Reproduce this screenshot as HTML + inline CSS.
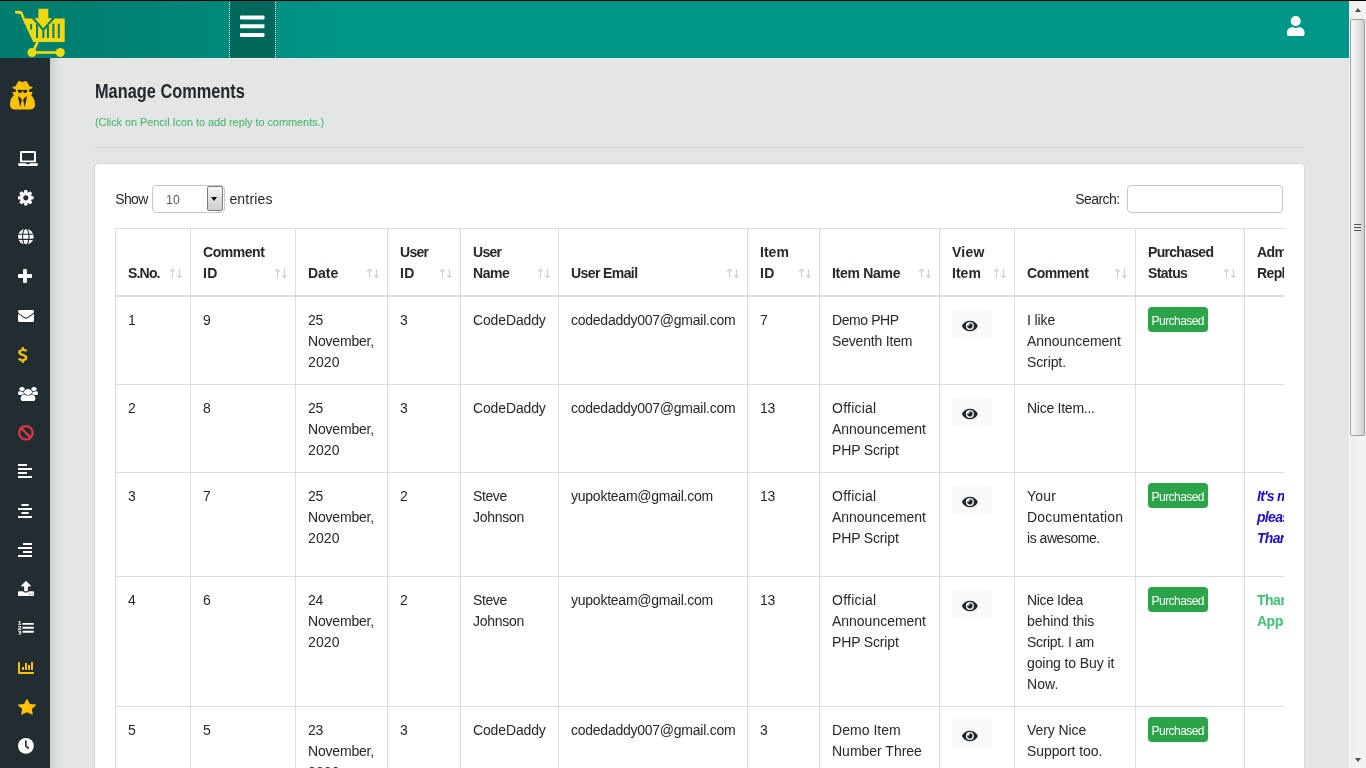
<!DOCTYPE html>
<html lang="en"><head><meta charset="utf-8"><title>Manage Comments</title>
<style>
*{box-sizing:border-box}
html,body{margin:0;padding:0}
body{width:1366px;height:768px;overflow:hidden;position:relative;background:#e4e5e5;font-family:"Liberation Sans",sans-serif;font-size:14px;line-height:21px;color:#23282c;letter-spacing:-.3px}
.abs{position:absolute}
#all{position:absolute;left:0;top:0;width:1366px;height:768px;will-change:transform}
#topline{left:0;top:0;width:1366px;height:1px;background:#000}
#hdr{left:0;top:1px;width:1349px;height:57px;background:linear-gradient(90deg,#007d6e 0,#008072 100px,#00897b 230px,#009688 335px)}
#brand{display:none}
#tgl{left:230px;top:0;width:45px;height:57px;background:#00695c;outline:1px dotted #fff}
#side{left:0;top:58px;width:50px;height:710px;background:#222d32}
#shade{left:50px;top:58px;width:12px;height:710px;background:linear-gradient(90deg,rgba(0,0,0,.10),rgba(0,0,0,.03) 50%,rgba(0,0,0,0))}
.ic{position:absolute;display:block;overflow:visible}
h1{position:absolute;left:95px;top:77px;margin:0;font-size:19.5px;line-height:28px;font-weight:bold;white-space:nowrap;letter-spacing:0;transform-origin:0 50%;transform:scaleX(.838);color:#23282c}
#hint{left:95px;top:112.7px;font-size:11px;line-height:18px;color:#3eb468;white-space:nowrap;letter-spacing:-.08px}
#hr{left:95px;top:147px;width:1209px;height:1px;background:#cfd0d1}
#card{left:95px;top:164px;width:1209px;height:640px;background:#fff;border-radius:4px;box-shadow:0 0 0 1px rgba(200,206,211,.55)}
.lbl{white-space:nowrap;line-height:21px}
#sel{left:151.5px;top:184.5px;width:73.2px;height:28.6px;border:1px solid #c3c8d0;border-radius:4px;background:#fff}
#sel .v{position:absolute;left:13.6px;top:4.4px;font-size:12.3px;line-height:20px;letter-spacing:0;color:#4f5862}
#sel .b{position:absolute;right:.6px;top:.7px;width:16.4px;height:25.2px;border:1px solid #7b7b7b;border-radius:2px;background:linear-gradient(180deg,#f6f6f6,#dedede 55%,#cfcfcf)}
#sel .b:after{content:"";position:absolute;left:3.6px;top:9.6px;border:3.6px solid transparent;border-top:4.2px solid #000;border-bottom:0}
#srch{left:1126.6px;top:184.5px;width:156.6px;height:28.6px;border:1px solid #c3c8d0;border-radius:4px;background:#fff}
#tw{left:115px;top:228px;width:1169px;height:560px;overflow:hidden}
table.dt{border-collapse:separate;border-spacing:0;table-layout:fixed;width:1259px}
.dt th,.dt td{border-left:1px solid #dcdde0;border-top:1px solid #dcdde0;padding:13px 0 0 12px;vertical-align:top;text-align:left;white-space:nowrap;overflow:hidden}
.dt th{height:69px;border-bottom:2px solid #dcdde0;font-weight:bold;vertical-align:bottom;padding:0 0 11px 12px;letter-spacing:-.62px;color:#23282c}
.thw{position:relative}
.srt{position:absolute;right:8.8px;bottom:0;font-family:"DejaVu Sans",sans-serif;font-weight:normal;font-size:12.5px;letter-spacing:-3.4px;color:rgba(35,40,44,.24)}
.dt tr.r1 td{border-top:0}
.eyeb{display:block;width:40px;height:30.4px;background:#f8f9fa;border-radius:3px;position:relative;margin-top:-1px}
.eyeb svg{position:absolute;left:9.8px;top:9.5px;display:block}
.bdg{display:block;position:relative;top:-3px;width:60px;height:24.6px;border-radius:4px;background:#2ba449;color:#fff;font-size:12px;line-height:29.2px;overflow:hidden;text-align:center;letter-spacing:-.56px;text-indent:-.5px}
.rb{color:#1c0fc9;font-weight:bold;font-style:italic;letter-spacing:-.7px}
.rg{color:#3fbf74;font-weight:bold;letter-spacing:-.5px}
#sb{left:1349px;top:1px;width:17px;height:767px;background:linear-gradient(90deg,#fbfbfb 0,#f0f0f0 2px,#f3f3f3)}
#sbt{left:.9px;top:18px;width:14.7px;height:417px;border:1px solid #9d9d9d;border-radius:2px;background:linear-gradient(90deg,#f7f7f7,#e6e6e8 50%,#cfcfd3)}
.arr{position:absolute;left:6.3px;width:0;height:0;border:3.6px solid transparent}
</style></head>
<body>
<div id="all">
<div id="hdr" class="abs">
  <div id="brand" class="abs"></div>
  <div id="tgl" class="abs"></div>
  <svg class="ic" style="left:240.2px;top:10.6px" width="24.5" height="28.4" viewBox="0 0 448 512"><path fill="#fff" d="M16 132h416c8.837 0 16-7.163 16-16V76c0-8.837-7.163-16-16-16H16C7.163 60 0 67.163 0 76v40c0 8.837 7.163 16 16 16zm0 160h416c8.837 0 16-7.163 16-16v-40c0-8.837-7.163-16-16-16H16c-8.837 0-16 7.163-16 16v40c0 8.837 7.163 16 16 16zm0 160h416c8.837 0 16-7.163 16-16v-40c0-8.837-7.163-16-16-16H16c-8.837 0-16 7.163-16 16v40c0 8.837 7.163 16 16 16z"/></svg>
  <svg class="ic" style="left:1287px;top:15px" width="17.5" height="20" viewBox="0 0 448 512"><path fill="#fff" d="M224 256c70.7 0 128-57.3 128-128S294.7 0 224 0 96 57.3 96 128s57.3 128 128 128zm89.600 32h-16.700c-22.200 10.200-46.900 16-72.900 16s-50.600-5.800-72.900-16h-16.700C60.200 288 0 348.200 0 422.400V464c0 26.500 21.500 48 48 48h352c26.500 0 48-21.500 48-48v-41.600c0-74.200-60.200-134.400-134.400-134.400z"/></svg>
  <svg class="ic" style="left:10px;top:3px" width="64" height="56" viewBox="10 4 64 56">
    <g fill="#f0d911" stroke="none">
      <path d="M16.300 10.800h3.400c1.300 0 2.300.7 2.800 1.900l2.500 5.900H64.700V42H33.300L23 20.200l-2.300-5.600c-.2-.6-.6-.9-1.200-.9h-3.200a1.450 1.450 0 0 1 0-2.900z"/>
      <path d="M38.400 8.700h9.900v9.500h4.100L43.300 28.300 34.700 18.200h3.700z"/>
      <circle cx="32" cy="52.500" r="4.500"/><circle cx="60.300" cy="52.500" r="4.500"/>
      <rect x="32" y="51.200" width="28" height="2.600"/>
      <path d="M36.300 41.500l2.600 1-5 10.500-2.500-1.200z"/>
    </g>
    <g fill="#00806f">
      <path d="M31.900 18.400l1.600-1.400 9.800 11.300 9.800-11.300 1.600 1.400-11.400 13.200z"/>
      <rect x="30.200" y="23.700" width="1.900" height="6" rx=".9"/>
      <rect x="36" y="23.700" width="2" height="14.300"/>
      <rect x="42.300" y="29" width="2" height="9"/>
      <rect x="46.900" y="26" width="2" height="12"/>
      <rect x="52.400" y="23.700" width="2" height="14.300"/>
      <rect x="57.800" y="23.700" width="2" height="14.300"/>
    </g>
  </svg>
</div>
<div id="topline" class="abs"></div>
<div id="side" class="abs"></div>
<div id="shade" class="abs"></div>
<svg class="ic" style="left:9.8px;top:81.3px" width="25" height="28.5" viewBox="0 -1536 1408 1664" preserveAspectRatio="none"><path fill="#ffc107" transform="scale(1,-1)" d="M576 0l96 448l-96 128l-128 64zM832 0l128 640l-128 -64l-96 -128zM992 1010q-2 4 -4 6q-10 8 -96 8q-70 0 -167 -19q-7 -2 -21 -2t-21 2q-97 19 -167 19q-86 0 -96 -8q-2 -2 -4 -6q2 -18 4 -27q2 -3 7.5 -6.5t7.5 -10.5q2 -4 7.5 -20.5t7 -20.5t7.5 -17t8.5 -17t9 -14
t12 -13.5t14 -9.5t17.5 -8t20.5 -4t24.5 -2q36 0 59 12.5t32.5 30t14.5 34.5t11.5 29.5t17.5 12.5h12q11 0 17.5 -12.5t11.5 -29.5t14.5 -34.5t32.5 -30t59 -12.5q13 0 24.5 2t20.5 4t17.5 8t14 9.5t12 13.5t9 14t8.5 17t7.5 17t7 20.5t7.5 20.5q2 7 7.5 10.5t7.5 6.5
q2 9 4 27zM1408 131q0 -121 -73 -190t-194 -69h-874q-121 0 -194 69t-73 190q0 61 4.5 118t19 125.5t37.5 123.5t63.5 103.5t93.5 74.5l-90 220h214q-22 64 -22 128q0 12 2 32q-194 40 -194 96q0 57 210 99q17 62 51.5 134t70.5 114q32 37 76 37q30 0 84 -31t84 -31t84 31
t84 31q44 0 76 -37q36 -42 70.5 -114t51.5 -134q210 -42 210 -99q0 -56 -194 -96q7 -81 -20 -160h214l-82 -225q63 -33 107.5 -96.5t65.5 -143.5t29 -151.5t8 -148.5z"/></svg>
<svg class="ic" style="left:17.5px;top:151px" width="20" height="15" viewBox="0 0 640 512" preserveAspectRatio="none"><path fill="#fff" d="M624 416H381.540c-.740 19.810-14.710 32-32.740 32H288c-18.690 0-33.020-17.470-32.770-32H16c-8.800 0-16 7.200-16 16v16c0 35.200 28.800 64 64 64h512c35.200 0 64-28.800 64-64v-16c0-8.800-7.200-16-16-16zM576 48c0-26.400-21.600-48-48-48H112C85.600 0 64 21.600 64 48v336h512V48zm-64 272H128V64h384v256z"/></svg>
<svg class="ic" style="left:18px;top:189.6px" width="15.6" height="15.6" viewBox="0 -1408 1536 1536" preserveAspectRatio="none"><path fill="#fff" transform="scale(1,-1)" d="M1024 640q0 106 -75 181t-181 75t-181 -75t-75 -181t75 -181t181 -75t181 75t75 181zM1536 749v-222q0 -12 -8 -23t-20 -13l-185 -28q-19 -54 -39 -91q35 -50 107 -138q10 -12 10 -25t-9 -23q-27 -37 -99 -108t-94 -71q-12 0 -26 9l-138 108q-44 -23 -91 -38
q-16 -136 -29 -186q-7 -28 -36 -28h-222q-14 0 -24.5 8.5t-11.5 21.5l-28 184q-49 16 -90 37l-141 -107q-10 -9 -25 -9q-14 0 -25 11q-126 114 -165 168q-7 10 -7 23q0 12 8 23q15 21 51 66.5t54 70.5q-27 50 -41 99l-183 27q-13 2 -21 12.5t-8 23.5v222q0 12 8 23t19 13
l186 28q14 46 39 92q-40 57 -107 138q-10 12 -10 24q0 10 9 23q26 36 98.5 107.5t94.5 71.5q13 0 26 -10l138 -107q44 23 91 38q16 136 29 186q7 28 36 28h222q14 0 24.5 -8.5t11.5 -21.5l28 -184q49 -16 90 -37l142 107q9 9 24 9q13 0 25 -10q129 -119 165 -170q7 -8 7 -22
q0 -12 -8 -23q-15 -21 -51 -66.5t-54 -70.5q26 -50 41 -98l183 -28q13 -2 21 -12.5t8 -23.5z"/></svg>
<svg class="ic" style="left:17.9px;top:228.7px" width="15.6" height="15.6" viewBox="0 0 16 16"><circle cx="8" cy="8" r="8" fill="#fff"/><g fill="none" stroke="#222d32" stroke-width="1.15"><ellipse cx="8" cy="8" rx="3.300" ry="8.600"/><path d="M0 5.400h16M0 10.600h16"/></g></svg>
<svg class="ic" style="left:17.5px;top:268.5px" width="14" height="14" viewBox="0 -1408 1408 1408" preserveAspectRatio="none"><path fill="#fff" transform="scale(1,-1)" d="M1408 800v-192q0 -40 -28 -68t-68 -28h-416v-416q0 -40 -28 -68t-68 -28h-192q-40 0 -68 28t-28 68v416h-416q-40 0 -68 28t-28 68v192q0 40 28 68t68 28h416v416q0 40 28 68t68 28h192q40 0 68 -28t28 -68v-416h416q40 0 68 -28t28 -68z"/></svg>
<svg class="ic" style="left:17.5px;top:309.5px" width="16" height="12" viewBox="0 -1280 1792 1408" preserveAspectRatio="none"><path fill="#fff" transform="scale(1,-1)" d="M1792 826v-794q0 -66 -47 -113t-113 -47h-1472q-66 0 -113 47t-47 113v794q44 -49 101 -87q362 -246 497 -345q57 -42 92.5 -65.5t94.5 -48t110 -24.5h1h1q51 0 110 24.5t94.5 48t92.5 65.5q170 123 498 345q57 39 100 87zM1792 1120q0 -79 -49 -151t-122 -123
q-376 -261 -468 -325q-10 -7 -42.5 -30.5t-54 -38t-52 -32.5t-57.5 -27t-50 -9h-1h-1q-23 0 -50 9t-57.5 27t-52 32.5t-54 38t-42.5 30.5q-91 64 -262 182.5t-205 142.5q-62 42 -117 115.5t-55 136.5q0 78 41.5 130t118.5 52h1472q65 0 112.5 -47t47.5 -113z"/></svg>
<svg class="ic" style="left:17.5px;top:346.8px" width="9.4" height="16" viewBox="44.96875 -1536 933.03125 1792" preserveAspectRatio="none"><path fill="#ffc107" transform="scale(1,-1)" d="M978 351q0 -153 -99.5 -263.5t-258.5 -136.5v-175q0 -14 -9 -23t-23 -9h-135q-13 0 -22.5 9.5t-9.5 22.5v175q-66 9 -127.5 31t-101.5 44.5t-74 48t-46.5 37.5t-17.5 18q-17 21 -2 41l103 135q7 10 23 12q15 2 24 -9l2 -2q113 -99 243 -125q37 -8 74 -8q81 0 142.5 43
t61.5 122q0 28 -15 53t-33.5 42t-58.5 37.5t-66 32t-80 32.5q-39 16 -61.5 25t-61.5 26.5t-62.5 31t-56.5 35.5t-53.5 42.5t-43.5 49t-35.5 58t-21 66.5t-8.5 78q0 138 98 242t255 134v180q0 13 9.5 22.5t22.5 9.5h135q14 0 23 -9t9 -23v-176q57 -6 110.5 -23t87 -33.5
t63.5 -37.5t39 -29t15 -14q17 -18 5 -38l-81 -146q-8 -15 -23 -16q-14 -3 -27 7q-3 3 -14.5 12t-39 26.5t-58.5 32t-74.5 26t-85.5 11.5q-95 0 -155 -43t-60 -111q0 -26 8.5 -48t29.5 -41.5t39.5 -33t56 -31t60.5 -27t70 -27.5q53 -20 81 -31.5t76 -35t75.5 -42.5t62 -50
t53 -63.5t31.5 -76.5t13 -94z"/></svg>
<svg class="ic" style="left:17.5px;top:386.6px" width="20" height="14" viewBox="0 -1536 1920 1792" preserveAspectRatio="none"><path fill="#fff" transform="scale(1,-1)" d="M593 640q-162 -5 -265 -128h-134q-82 0 -138 40.5t-56 118.5q0 353 124 353q6 0 43.5 -21t97.5 -42.5t119 -21.5q67 0 133 23q-5 -37 -5 -66q0 -139 81 -256zM1664 3q0 -120 -73 -189.5t-194 -69.5h-874q-121 0 -194 69.5t-73 189.5q0 53 3.5 103.5t14 109t26.5 108.5
t43 97.5t62 81t85.5 53.5t111.5 20q10 0 43 -21.5t73 -48t107 -48t135 -21.5t135 21.5t107 48t73 48t43 21.5q61 0 111.5 -20t85.5 -53.5t62 -81t43 -97.5t26.5 -108.5t14 -109t3.5 -103.5zM640 1280q0 -106 -75 -181t-181 -75t-181 75t-75 181t75 181t181 75t181 -75
t75 -181zM1344 896q0 -159 -112.5 -271.5t-271.5 -112.5t-271.5 112.5t-112.5 271.5t112.5 271.5t271.5 112.5t271.5 -112.5t112.5 -271.5zM1920 671q0 -78 -56 -118.5t-138 -40.5h-134q-103 123 -265 128q81 117 81 256q0 29 -5 66q66 -23 133 -23q59 0 119 21.5t97.5 42.5
t43.5 21q124 0 124 -353zM1792 1280q0 -106 -75 -181t-181 -75t-181 75t-75 181t75 181t181 75t181 -75t75 -181z"/></svg>
<svg class="ic" style="transform:scaleX(-1);left:17.5px;top:424.6px" width="15.8" height="15.6" viewBox="0 -1413 1536 1541" preserveAspectRatio="none"><path fill="#dc3545" transform="scale(1,-1)" d="M1312 643q0 161 -87 295l-754 -753q137 -89 297 -89q111 0 211.5 43.5t173.5 116.5t116 174.5t43 212.5zM313 344l755 754q-135 91 -300 91q-148 0 -273 -73t-198 -199t-73 -274q0 -162 89 -299zM1536 643q0 -157 -61 -300t-163.5 -246t-245 -164t-298.5 -61t-298.5 61
t-245 164t-163.5 246t-61 300t61 299.5t163.5 245.5t245 164t298.5 61t298.5 -61t245 -164t163.5 -245.5t61 -299.5z"/></svg>
<svg class="ic" style="left:17.5px;top:464.4px" width="14" height="14" viewBox="0 0 14 14"><path fill="#fff" d="M0 0h9v2H0zM0 4h14v2H0zM0 8h9v2H0zM0 12h14v2H0z"/></svg>
<svg class="ic" style="left:17.5px;top:503.6px" width="14" height="14" viewBox="0 0 14 14"><path fill="#fff" d="M3.400 0h7.200v2H3.400zM0 4h14v2H0zM3.400 8h7.200v2H3.400zM0 12h14v2H0z"/></svg>
<svg class="ic" style="left:17.5px;top:542.7px" width="14" height="14" viewBox="0 0 14 14"><path fill="#fff" d="M5 0h9v2H5zM0 4h14v2H0zM5 8h9v2H5zM0 12h14v2H0z"/></svg>
<svg class="ic" style="left:17.5px;top:581.3px" width="16" height="15" viewBox="0 -1472 1664 1600" preserveAspectRatio="none"><path fill="#fff" transform="scale(1,-1)" d="M1280 64q0 26 -19 45t-45 19t-45 -19t-19 -45t19 -45t45 -19t45 19t19 45zM1536 64q0 26 -19 45t-45 19t-45 -19t-19 -45t19 -45t45 -19t45 19t19 45zM1664 288v-320q0 -40 -28 -68t-68 -28h-1472q-40 0 -68 28t-28 68v320q0 40 28 68t68 28h427q21 -56 70.5 -92
t110.5 -36h256q61 0 110.5 36t70.5 92h427q40 0 68 -28t28 -68zM1339 936q-17 -40 -59 -40h-256v-448q0 -26 -19 -45t-45 -19h-256q-26 0 -45 19t-19 45v448h-256q-42 0 -59 40q-17 39 14 69l448 448q18 19 45 19t45 -19l448 -448q31 -30 14 -69z"/></svg>
<svg class="ic" style="left:17.6px;top:620.8px" width="15.8" height="13.6" viewBox="15 -1527 1777 1783" preserveAspectRatio="none"><path fill="#fff" transform="scale(1,-1)" d="M381 -84q0 -80 -54.5 -126t-135.5 -46q-106 0 -172 66l57 88q49 -45 106 -45q29 0 50.5 14.5t21.5 42.5q0 64 -105 56l-26 56q8 10 32.5 43.5t42.5 54t37 38.5v1q-16 0 -48.5 -1t-48.5 -1v-53h-106v152h333v-88l-95 -115q51 -12 81 -49t30 -88zM383 543v-159h-362
q-6 36 -6 54q0 51 23.5 93t56.5 68t66 47.5t56.5 43.5t23.5 45q0 25 -14.5 38.5t-39.5 13.5q-46 0 -81 -58l-85 59q24 51 71.5 79.5t105.5 28.5q73 0 123 -41.5t50 -112.5q0 -50 -34 -91.5t-75 -64.5t-75.5 -50.5t-35.5 -52.5h127v60h105zM1792 224v-192q0 -13 -9.5 -22.5
t-22.5 -9.5h-1216q-13 0 -22.5 9.5t-9.5 22.5v192q0 14 9 23t23 9h1216q13 0 22.5 -9.5t9.5 -22.5zM384 1123v-99h-335v99h107q0 41 0.5 121.5t0.5 121.5v12h-2q-8 -17 -50 -54l-71 76l136 127h106v-404h108zM1792 736v-192q0 -13 -9.5 -22.5t-22.5 -9.5h-1216
q-13 0 -22.5 9.5t-9.5 22.5v192q0 14 9 23t23 9h1216q13 0 22.5 -9.5t9.5 -22.5zM1792 1248v-192q0 -13 -9.5 -22.5t-22.5 -9.5h-1216q-13 0 -22.5 9.5t-9.5 22.5v192q0 13 9.5 22.5t22.5 9.5h1216q13 0 22.5 -9.5t9.5 -22.5z"/></svg>
<svg class="ic" style="left:17.5px;top:659.5px" width="16" height="16" viewBox="0 0 512 512"><path fill="#ffc107" d="M332.800 320h38.400c6.400 0 12.800-6.400 12.800-12.800V172.800c0-6.400-6.400-12.800-12.800-12.800h-38.400c-6.400 0-12.800 6.400-12.800 12.800v134.400c0 6.400 6.400 12.800 12.800 12.800zm96 0h38.400c6.400 0 12.800-6.400 12.800-12.800V76.800c0-6.400-6.400-12.800-12.800-12.800h-38.400c-6.400 0-12.800 6.400-12.800 12.800v230.400c0 6.400 6.400 12.800 12.800 12.800zm-288 0h38.400c6.400 0 12.800-6.400 12.800-12.800v-70.400c0-6.400-6.400-12.800-12.800-12.800h-38.400c-6.400 0-12.800 6.400-12.800 12.800v70.400c0 6.400 6.400 12.800 12.800 12.800zm96 0h38.400c6.400 0 12.800-6.400 12.800-12.800V108.800c0-6.400-6.400-12.800-12.800-12.800h-38.400c-6.400 0-12.800 6.400-12.800 12.800v198.400c0 6.400 6.400 12.800 12.800 12.800zM496 384H64V80c0-8.840-7.160-16-16-16H16C7.160 64 0 71.160 0 80v336c0 17.670 14.330 32 32 32h464c8.840 0 16-7.160 16-16v-32c0-8.840-7.160-16-16-16z"/></svg>
<svg class="ic" style="left:17.5px;top:698.6px" width="18" height="15.7" viewBox="0 -1504 1664 1587" preserveAspectRatio="none"><path fill="#ffc107" transform="scale(1,-1)" d="M1664 889q0 -22 -26 -48l-363 -354l86 -500q1 -7 1 -20q0 -21 -10.5 -35.5t-30.5 -14.5q-19 0 -40 12l-449 236l-449 -236q-22 -12 -40 -12q-21 0 -31.5 14.5t-10.5 35.5q0 6 2 20l86 500l-364 354q-25 27 -25 48q0 37 56 46l502 73l225 455q19 41 49 41t49 -41l225 -455
l502 -73q56 -9 56 -46z"/></svg>
<svg class="ic" style="left:17.5px;top:737.8px" width="15.8" height="15.8" viewBox="0 0 16 16"><circle cx="8" cy="8" r="8" fill="#fff"/><path d="M8 3.2v5.1l2.6 1.9" fill="none" stroke="#222d32" stroke-width="1.7" stroke-linecap="round" stroke-linejoin="round"/></svg>
<h1>Manage Comments</h1>
<div id="hint" class="abs">(Click on Pencil Icon to add reply to comments.)</div>
<div id="hr" class="abs"></div>
<div id="card" class="abs"></div>
<div class="abs lbl" style="left:115.3px;top:189px;letter-spacing:-.65px">Show</div>
<div id="sel" class="abs"><span class="v">10</span><span class="b"></span></div>
<div class="abs lbl" style="left:229.4px;top:189px;letter-spacing:.18px">entries</div>
<div class="abs lbl" style="left:1075.2px;top:189px;letter-spacing:-.55px">Search:</div>
<div id="srch" class="abs"></div>
<div id="tw" class="abs"><table class="dt"><colgroup><col style="width:75px"><col style="width:105px"><col style="width:92px"><col style="width:73px"><col style="width:98px"><col style="width:189px"><col style="width:72px"><col style="width:120px"><col style="width:75px"><col style="width:121px"><col style="width:109px"><col style="width:130px"></colgroup><thead><tr><th><div class="thw"><span style="letter-spacing:-0.82px">S.No.</span><span class="srt">↑↓</span></div></th><th><div class="thw"><span style="letter-spacing:-0.46px">Comment</span><br><span style="letter-spacing:0.3px">ID</span><span class="srt">↑↓</span></div></th><th><div class="thw"><span style="letter-spacing:-0.05px">Date</span><span class="srt">↑↓</span></div></th><th><div class="thw"><span style="letter-spacing:-0.71px">User</span><br><span style="letter-spacing:0.3px">ID</span><span class="srt">↑↓</span></div></th><th><div class="thw"><span style="letter-spacing:-0.71px">User</span><br><span style="letter-spacing:-0.41px">Name</span><span class="srt">↑↓</span></div></th><th><div class="thw"><span style="letter-spacing:-0.59px">User Email</span><span class="srt">↑↓</span></div></th><th><div class="thw"><span style="letter-spacing:0.03px">Item</span><br><span style="letter-spacing:0.3px">ID</span><span class="srt">↑↓</span></div></th><th><div class="thw"><span style="letter-spacing:-0.29px">Item Name</span><span class="srt">↑↓</span></div></th><th><div class="thw"><span style="letter-spacing:0.28px">View</span><br><span style="letter-spacing:0.03px">Item</span><span class="srt">↑↓</span></div></th><th><div class="thw"><span style="letter-spacing:-0.46px">Comment</span><span class="srt">↑↓</span></div></th><th><div class="thw"><span style="letter-spacing:-0.7px">Purchased</span><br><span style="letter-spacing:-0.58px">Status</span><span class="srt">↑↓</span></div></th><th><div class="thw">Admin<br>Reply</div></th></tr></thead><tbody><tr class="r1" style="height:87px"><td>1</td><td>9</td><td><span style="letter-spacing:-0.38px">25</span><br><span style="letter-spacing:-0.19px">November,</span><br><span style="letter-spacing:0.11px">2020</span></td><td>3</td><td><span style="letter-spacing:-0.14px">CodeDaddy</span></td><td><span style="letter-spacing:-0.25px">codedaddy007@gmail.com</span></td><td>7</td><td><span style="letter-spacing:-0.42px">Demo PHP</span><br><span style="letter-spacing:-0.18px">Seventh Item</span></td><td><span class="eyeb"><svg width="15.750" height="14" viewBox="0 0 576 512"><path fill="#23282c" d="M572.520 241.400C518.290 135.590 410.930 64 288 64S57.680 135.640 3.480 241.410a32.350 32.350 0 0 0 0 29.190C57.710 376.410 165.070 448 288 448s230.320-71.640 284.520-177.410a32.350 32.350 0 0 0 0-29.190zM288 400a144 144 0 1 1 144-144 143.930 143.930 0 0 1-144 144zm0-240a95.310 95.310 0 0 0-25.310 3.790 47.850 47.850 0 0 1-66.900 66.900A95.780 95.780 0 1 0 288 160z"/></svg></span></td><td><span style="letter-spacing:-0.12px">I like</span><br><span style="letter-spacing:-0.02px">Announcement</span><br><span style="letter-spacing:-0.11px">Script.</span></td><td><span class="bdg">Purchased</span></td><td></td></tr><tr class="r2" style="height:88px"><td>2</td><td>8</td><td><span style="letter-spacing:-0.38px">25</span><br><span style="letter-spacing:-0.19px">November,</span><br><span style="letter-spacing:0.11px">2020</span></td><td>3</td><td><span style="letter-spacing:-0.14px">CodeDaddy</span></td><td><span style="letter-spacing:-0.25px">codedaddy007@gmail.com</span></td><td><span style="letter-spacing:-0.38px">13</span></td><td><span style="letter-spacing:0.24px">Official</span><br><span style="letter-spacing:-0.02px">Announcement</span><br><span style="letter-spacing:-0.15px">PHP Script</span></td><td><span class="eyeb"><svg width="15.750" height="14" viewBox="0 0 576 512"><path fill="#23282c" d="M572.520 241.400C518.290 135.590 410.930 64 288 64S57.680 135.640 3.480 241.410a32.350 32.350 0 0 0 0 29.190C57.710 376.410 165.070 448 288 448s230.320-71.640 284.520-177.410a32.350 32.350 0 0 0 0-29.190zM288 400a144 144 0 1 1 144-144 143.930 143.930 0 0 1-144 144zm0-240a95.310 95.310 0 0 0-25.310 3.790 47.850 47.850 0 0 1-66.900 66.900A95.780 95.780 0 1 0 288 160z"/></svg></span></td><td><span style="letter-spacing:-0.26px">Nice Item...</span></td><td></td><td></td></tr><tr class="r3" style="height:104px"><td>3</td><td>7</td><td><span style="letter-spacing:-0.38px">25</span><br><span style="letter-spacing:-0.19px">November,</span><br><span style="letter-spacing:0.11px">2020</span></td><td>2</td><td><span style="letter-spacing:-0.38px">Steve</span><br><span style="letter-spacing:-0.29px">Johnson</span></td><td><span style="letter-spacing:-0.24px">yupokteam@gmail.com</span></td><td><span style="letter-spacing:-0.38px">13</span></td><td><span style="letter-spacing:0.24px">Official</span><br><span style="letter-spacing:-0.02px">Announcement</span><br><span style="letter-spacing:-0.15px">PHP Script</span></td><td><span class="eyeb"><svg width="15.750" height="14" viewBox="0 0 576 512"><path fill="#23282c" d="M572.520 241.400C518.290 135.590 410.930 64 288 64S57.680 135.640 3.480 241.410a32.350 32.350 0 0 0 0 29.190C57.710 376.410 165.070 448 288 448s230.320-71.640 284.520-177.410a32.350 32.350 0 0 0 0-29.190zM288 400a144 144 0 1 1 144-144 143.930 143.930 0 0 1-144 144zm0-240a95.310 95.310 0 0 0-25.310 3.790 47.850 47.850 0 0 1-66.900 66.900A95.780 95.780 0 1 0 288 160z"/></svg></span></td><td><span style="letter-spacing:0.2px">Your</span><br><span style="letter-spacing:0.16px">Documentation</span><br><span style="letter-spacing:-0.46px">is awesome.</span></td><td><span class="bdg">Purchased</span></td><td><span class="rb">It's my pleasure<br>please rate us.<br>Thanks a lot</span></td></tr><tr class="r4" style="height:130px"><td>4</td><td>6</td><td><span style="letter-spacing:-0.38px">24</span><br><span style="letter-spacing:-0.19px">November,</span><br><span style="letter-spacing:0.11px">2020</span></td><td>2</td><td><span style="letter-spacing:-0.38px">Steve</span><br><span style="letter-spacing:-0.29px">Johnson</span></td><td><span style="letter-spacing:-0.24px">yupokteam@gmail.com</span></td><td><span style="letter-spacing:-0.38px">13</span></td><td><span style="letter-spacing:0.24px">Official</span><br><span style="letter-spacing:-0.02px">Announcement</span><br><span style="letter-spacing:-0.15px">PHP Script</span></td><td><span class="eyeb"><svg width="15.750" height="14" viewBox="0 0 576 512"><path fill="#23282c" d="M572.520 241.400C518.290 135.590 410.930 64 288 64S57.680 135.640 3.480 241.410a32.350 32.350 0 0 0 0 29.190C57.710 376.410 165.070 448 288 448s230.320-71.640 284.520-177.410a32.350 32.350 0 0 0 0-29.190zM288 400a144 144 0 1 1 144-144 143.930 143.930 0 0 1-144 144zm0-240a95.310 95.310 0 0 0-25.310 3.790 47.850 47.850 0 0 1-66.900 66.900A95.780 95.780 0 1 0 288 160z"/></svg></span></td><td><span style="letter-spacing:-0.36px">Nice Idea</span><br><span style="letter-spacing:-0.04px">behind this</span><br><span style="letter-spacing:-0.32px">Script. I am</span><br><span style="letter-spacing:-0.1px">going to Buy it</span><br><span style="letter-spacing:0.09px">Now.</span></td><td><span class="bdg">Purchased</span></td><td><span class="rg">Thanks for<br>Appreciation</span></td></tr><tr class="r5" style="height:100px"><td>5</td><td>5</td><td><span style="letter-spacing:-0.38px">23</span><br><span style="letter-spacing:-0.19px">November,</span><br><span style="letter-spacing:0.11px">2020</span></td><td>3</td><td><span style="letter-spacing:-0.14px">CodeDaddy</span></td><td><span style="letter-spacing:-0.25px">codedaddy007@gmail.com</span></td><td>3</td><td><span style="letter-spacing:0.03px">Demo Item</span><br><span style="letter-spacing:-0.01px">Number Three</span></td><td><span class="eyeb"><svg width="15.750" height="14" viewBox="0 0 576 512"><path fill="#23282c" d="M572.520 241.400C518.290 135.590 410.930 64 288 64S57.680 135.640 3.480 241.410a32.350 32.350 0 0 0 0 29.190C57.710 376.410 165.070 448 288 448s230.320-71.640 284.520-177.410a32.350 32.350 0 0 0 0-29.190zM288 400a144 144 0 1 1 144-144 143.930 143.930 0 0 1-144 144zm0-240a95.310 95.310 0 0 0-25.310 3.790 47.850 47.850 0 0 1-66.900 66.900A95.780 95.780 0 1 0 288 160z"/></svg></span></td><td><span style="letter-spacing:-0.09px">Very Nice</span><br><span style="letter-spacing:-0.09px">Support too.</span></td><td><span class="bdg">Purchased</span></td><td></td></tr></tbody></table></div>
<div id="sb" class="abs">
  <div class="arr" style="top:7px;border-bottom:4px solid #505050;border-top:0"></div>
  <div id="sbt" class="abs"><div style="position:absolute;left:2.8px;top:204px;width:7.5px;height:7px;background:repeating-linear-gradient(180deg,#555 0,#555 1px,transparent 1px,transparent 3px)"></div></div>
  <div class="arr" style="top:757px;border-top:4px solid #505050;border-bottom:0"></div>
</div>
</div>
</body></html>
